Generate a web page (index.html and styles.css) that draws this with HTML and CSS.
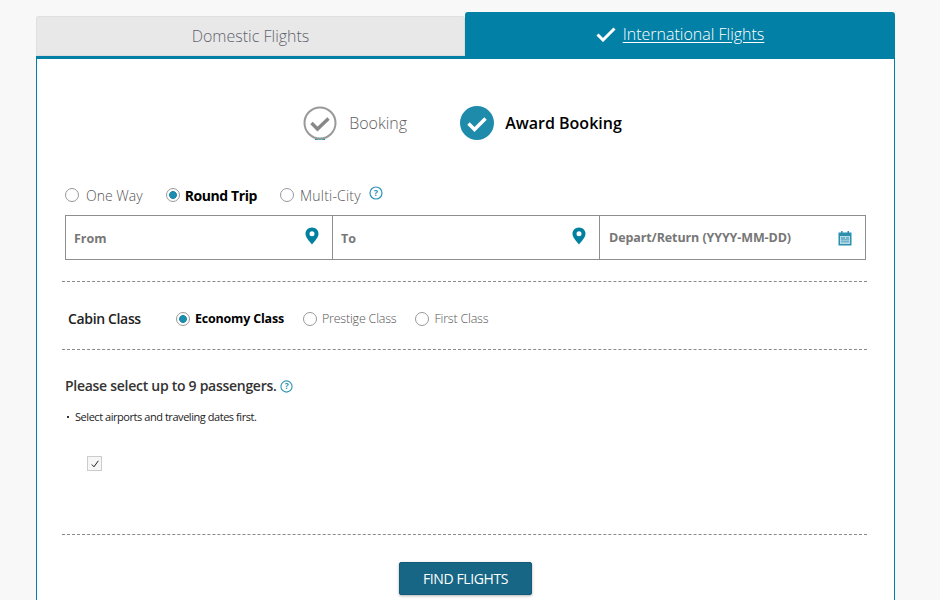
FILE: index.html
```html
<!DOCTYPE html>
<html lang="en">
<head>
<meta charset="utf-8">
<title>Flights</title>
<link rel="stylesheet" href="styles.css">
</head>
<body>
<main class="wrap">
  <div class="tabs">
    <div class="tab tab-off">Domestic Flights</div>
    <div class="tab tab-on">
      <svg class="tab-check" width="20" height="16" viewBox="0 0 20 16"><path d="M1.500 8.500 7 14 18.500 2.500" fill="none" stroke="#fff" stroke-width="3"/></svg>
      <a href="#" class="tab-link">International Flights</a>
    </div>
  </div>
  <div class="panel">
    <div class="steps">
      <div class="step">
        <svg class="step-icon" width="34" height="34" viewBox="0 0 34 34"><path d="M12 33.300Q17 34.500 22 33.300" fill="none" stroke="#1f8bab" stroke-width="1.200"/><circle cx="17" cy="17" r="15.500" fill="#fff" stroke="#999" stroke-width="2"/><path d="M8.500 17 14.500 23 25.500 12.500" fill="none" stroke="#888" stroke-width="3.400"/></svg>
        <span class="step-label step-plain">Booking</span>
      </div>
      <div class="step">
        <svg class="step-icon" width="34" height="34" viewBox="0 0 34 34"><circle cx="17" cy="17" r="17" fill="#1f8bab"/><path d="M8.500 17.500 14.500 23.500 25.500 12.500" fill="none" stroke="#fff" stroke-width="3.400"/></svg>
        <span class="step-label step-active">Award Booking</span>
      </div>
    </div>

    <div class="trip">
      <label class="opt opt-first"><span class="radio"></span>One Way</label>
      <label class="opt opt-on"><span class="radio radio-on"></span>Round Trip</label>
      <label class="opt opt-last"><span class="radio"></span>Multi-City</label>
      <svg class="help help-trip" width="14" height="14" viewBox="0 0 14 14"><circle cx="7" cy="7" r="6" fill="none" stroke="#2b93b3" stroke-width="1.200"/><text x="7" y="10.200" text-anchor="middle" class="help-q">?</text></svg>
    </div>

    <div class="fields">
      <div class="field field-a">
        <span>From</span>
        <svg class="pin" width="14" height="18" viewBox="0 0 14 18"><path fill-rule="evenodd" fill="#02809f" d="M7 0.500C3.300 0.500 0.500 3.300 0.500 6.800 0.500 10.500 4.500 14.500 7 17.500 9.500 14.500 13.500 10.500 13.500 6.800 13.500 3.300 10.700 0.500 7 0.500ZM7 4.300A2.500 2.500 0 1 1 7 9.300 2.500 2.500 0 1 1 7 4.300Z"/></svg>
      </div>
      <div class="field field-b">
        <span>To</span>
        <svg class="pin" width="14" height="18" viewBox="0 0 14 18"><path fill-rule="evenodd" fill="#02809f" d="M7 0.500C3.300 0.500 0.500 3.300 0.500 6.800 0.500 10.500 4.500 14.500 7 17.500 9.500 14.500 13.500 10.500 13.500 6.800 13.500 3.300 10.700 0.500 7 0.500ZM7 4.300A2.500 2.500 0 1 1 7 9.300 2.500 2.500 0 1 1 7 4.300Z"/></svg>
      </div>
      <div class="field field-c">
        <span>Depart/Return (YYYY-MM-DD)</span>
        <svg class="cal" width="14" height="16" viewBox="0 0 14 16"><path fill="#2b8fae" d="M0.500 2.500H3V1H4.500V2.500H9.500V1H11V2.500H13.500V15.500H0.500Z"/><path fill="#b9dbe6" d="M2 6H12V14H2Z"/><path fill="#2b8fae" d="M3 7.500H7V8.500H3ZM8 7.500H11V8.500H8ZM3 9.500H11V10.300H3ZM3 11.500H11V12.300H3Z"/></svg>
      </div>
    </div>

    <div class="cabin">
      <span class="cabin-title">Cabin Class</span>
      <label class="opt2 opt2-on"><span class="radio radio-on"></span>Economy Class</label>
      <label class="opt2"><span class="radio"></span>Prestige Class</label>
      <label class="opt2"><span class="radio"></span>First Class</label>
    </div>

    <div class="pax">
      <div class="pax-title">Please select up to 9 passengers.
        <svg class="help" width="13" height="13" viewBox="0 0 14 14"><circle cx="7" cy="7" r="6" fill="none" stroke="#2b93b3" stroke-width="1.200"/><text x="7" y="10.200" text-anchor="middle" class="help-q">?</text></svg>
      </div>
      <ul class="notes"><li>Select airports and traveling dates first.</li></ul>
      <div class="check-row">
        <span class="check"><svg width="10" height="10" viewBox="0 0 10 10"><path d="M1.800 5.500 4 7.800 8.300 1.800" fill="none" stroke="#222" stroke-width="1"/></svg></span>
      </div>
    </div>

    <div class="actions">
      <button class="find" type="button">FIND FLIGHTS</button>
    </div>
  </div>
</main>
</body>
</html>
```

FILE: styles.css
```css
* { box-sizing: border-box; }
html, body { margin: 0; height: 600px; overflow: hidden; }
body {
  background: #f8f8f8;
  font-family: "Open Sans", "Liberation Sans", sans-serif;
  color: #000;
}
.wrap { width: 859px; margin-left: 36px; padding-top: 12px; }

.tabs { display: flex; align-items: flex-end; height: 44px; }
.tab { display: flex; align-items: center; justify-content: center; }
.tab-off {
  width: 429px;
  height: 40px;
  background: #e8e8e8;
  border-top: 1px solid #e0e0e0;
  border-left: 1px solid #e0e0e0;
  border-right: 1px solid #dcdcdc;
  border-bottom: 1px solid #ddd;
  border-radius: 3px 3px 0 0;
  color: #5f636e;
  font-size: 16px;
  font-weight: 300;
}
.tab-on {
  width: 430px;
  height: 44px;
  background: #0280a5;
  border-radius: 3px 3px 0 0;
  color: #fff;
  font-size: 16px;
  font-weight: 300;
  gap: 7px;
  padding-bottom: 1px;
}
.tab-link { color: #fff; text-decoration: underline; text-underline-offset: 2px; }
.panel {
  height: 544px;
  background: #fff;
  border: 1px solid #0280a5;
  border-top: 3px solid #0280a5;
  border-bottom: 0;
  padding: 0 27px 0 25px;
}

.steps {
  display: flex;
  justify-content: center;
  gap: 53px;
  height: 129px;
  padding-top: 47px;
  margin-right: 4px;
}
.step { display: flex; align-items: flex-start; gap: 11px; height: 34px; }
.step-label {
  font-size: 16px;
  font-weight: 300;
  line-height: 34px;
  color: #5e5e5e;
}
.step-plain { margin-left: 1px; }
.step-active { font-weight: 600; color: #000; }

.trip {
  display: flex;
  align-items: center;
  height: 26px;
  padding-left: 3px;
  font-size: 14px;
  margin-top: -6px;
}
.opt { display: flex; align-items: center; gap: 6px; font-weight: 300; color: #555; margin-right: 22px; }
.opt-first { gap: 7px; margin-right: 23px; }
.opt-on { font-weight: 700; color: #000; gap: 5px; margin-right: 23px; letter-spacing: -0.4px; }
.opt-last { letter-spacing: 0.2px; }
.radio {
  display: inline-block;
  width: 14px;
  height: 14px;
  border: 1px solid #999;
  border-radius: 50%;
  background: #fff;
  flex: none;
}
.radio-on { background: radial-gradient(circle, #1d8cad 0 3.6px, #fff 4.2px); }
.help { vertical-align: -2px; }
.help-trip { margin: -4px 0 0 -14px; }
.help-q { font-family: "Open Sans", sans-serif; font-size: 9px; font-weight: 700; fill: #2b93b3; }

.fields {
  display: flex;
  height: 45px;
  margin: 7px 1px 0 3px;
  border: 1px solid #8e8e8e;
}
.field {
  display: flex;
  align-items: center;
  justify-content: space-between;
  padding: 0 13px 0 8px;
  font-size: 12.5px;
  font-weight: 700;
  color: #777;
}
.field-a, .field-b { width: 267px; border-right: 1px solid #8e8e8e; }
.field-a span, .field-b span { margin-top: 1px; }
.field-c { flex: 1; padding-left: 9px; padding-right: 14px; letter-spacing: -0.1px; }
.pin { margin-top: -4px; }
.cal { margin-top: 1px; margin-right: -1px; }

.cabin {
  display: flex;
  align-items: center;
  height: 69px;
  margin-top: 21px;
  border-top: 1px dashed #8a8a8a;
  border-bottom: 1px dashed #8a8a8a;
  padding: 6px 0 0 6px;
  width: 805px;
}
.cabin-title { width: 108px; font-size: 14px; font-weight: 600; color: #222; letter-spacing: -0.35px; }
.opt2 { display: flex; align-items: center; gap: 5px; font-size: 12.5px; font-weight: 300; letter-spacing: -0.2px; color: #555; margin-right: 19px; }
.opt2-on { font-weight: 700; color: #000; }

.pax {
  width: 805px;
  height: 185px;
  padding: 26px 0 0 3px;
  border-bottom: 1px dashed #8a8a8a;
}
.pax-title { font-size: 14px; font-weight: 600; color: #333; letter-spacing: -0.28px; line-height: 20px; }
.notes { list-style: none; margin: 13px 0 0; padding: 0; font-size: 11px; letter-spacing: -0.45px; color: #222; line-height: 16px; }
.notes li { position: relative; padding-left: 10px; }
.notes li::before { content: ""; position: absolute; left: 2px; top: 7px; width: 2px; height: 2px; background: #333; }
.check-row { margin: 31px 0 0 22px; }
.check {
  display: flex;
  align-items: center;
  justify-content: center;
  width: 15px;
  height: 15px;
  border: 1px solid #ccc;
  background: #f6f6f6;
}

.actions { display: flex; justify-content: center; padding: 27px 0 0 2px; }
.find {
  width: 133px;
  height: 33px;
  background: #176686;
  border: 1px solid #125a76;
  border-radius: 2px;
  box-shadow: 0 1px 3px rgba(0,0,0,.3);
  color: #fff;
  font: 400 14px "Open Sans", sans-serif;
  letter-spacing: -0.4px;
}
```
